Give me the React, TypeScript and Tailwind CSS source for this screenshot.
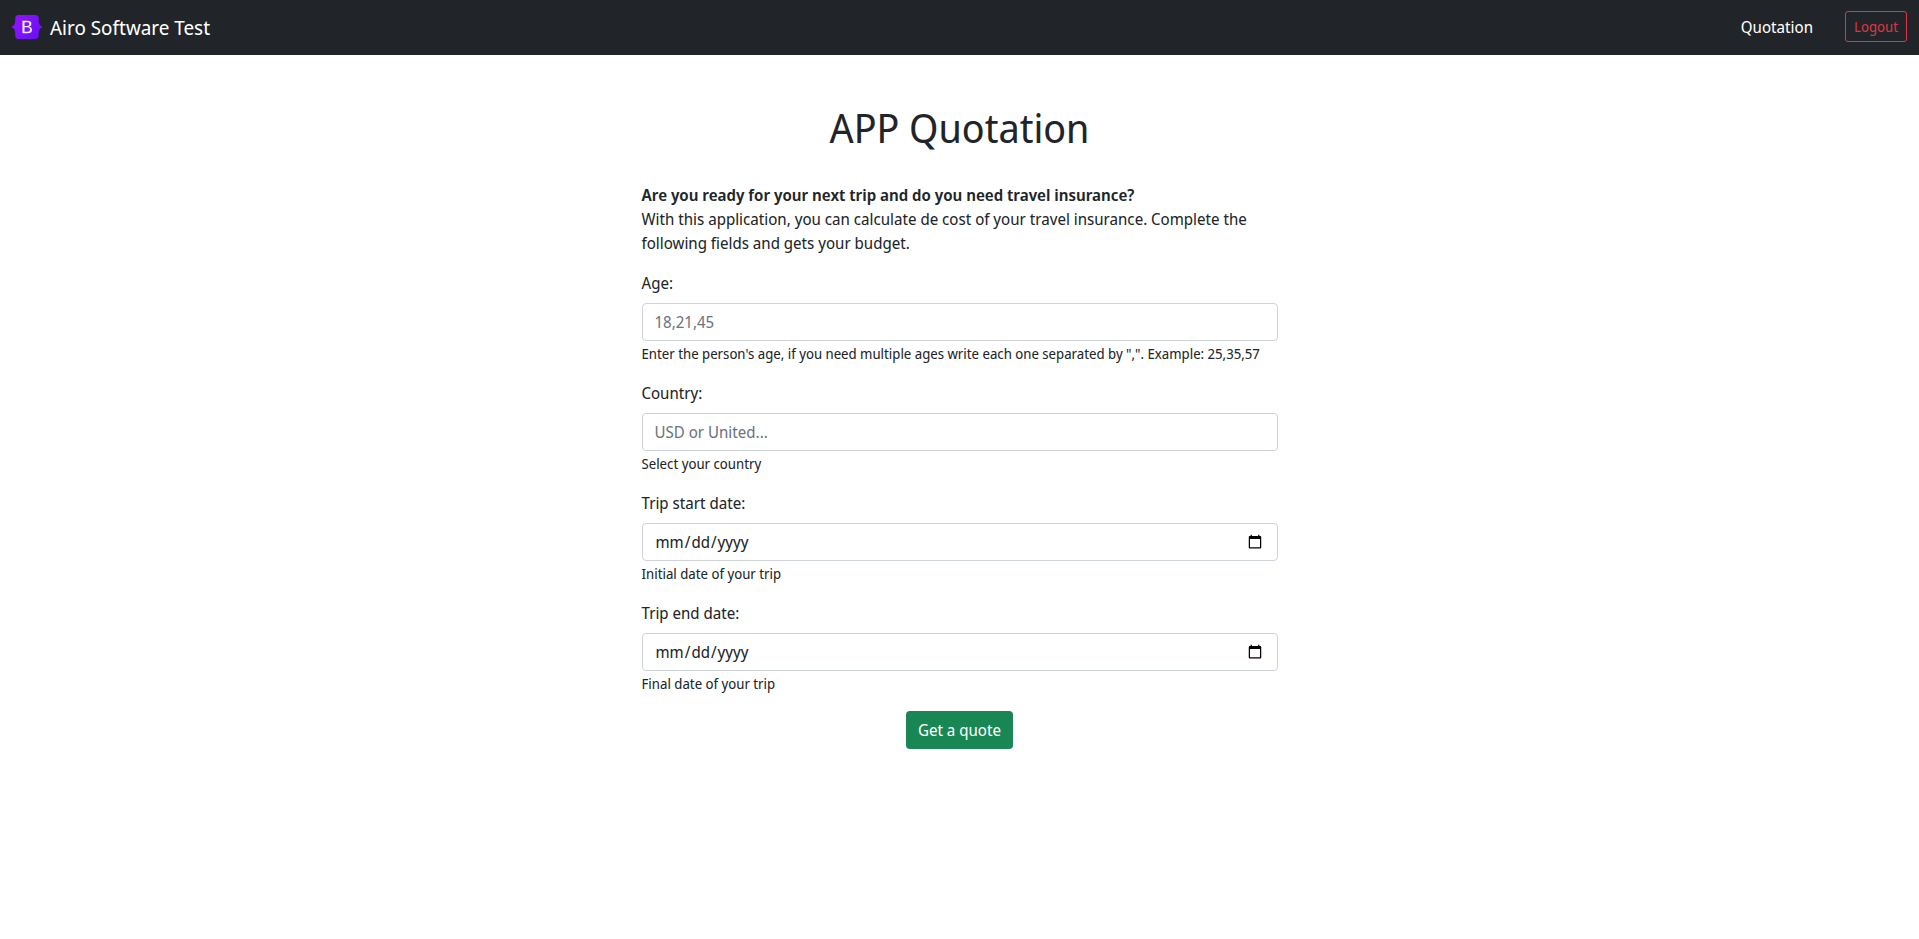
import { useId } from 'react';

function BootstrapLogo() {
  return (
    <svg width="30" height="24" viewBox="0 0 512 408" aria-hidden="true" className="h-6 w-[30px]">
      <defs>
        <linearGradient id="logo-bg" x1="76" y1="11" x2="524" y2="366" gradientUnits="userSpaceOnUse">
          <stop stopColor="#9013fe" />
          <stop offset="1" stopColor="#6610f2" />
        </linearGradient>
        <linearGradient id="logo-letter" x1="194" y1="95" x2="293" y2="263" gradientUnits="userSpaceOnUse">
          <stop stopColor="#fff" />
          <stop offset="1" stopColor="#f1e5fc" />
        </linearGradient>
      </defs>
      <path
        fill="url(#logo-bg)"
        d="M56.500 53.300C55.500 25.500 77.200 0 106.300 0h299.500c29.100 0 50.800 25.500 49.800 53.300-.9 26.700.3 61.300 9 89.500 8.700 28.200 23.500 46.100 47.600 48.400v26c-24.100 2.300-38.900 20.200-47.600 48.400-8.700 28.200-9.900 62.800-9 89.500 1 27.800-20.700 53.300-49.800 53.300H106.300c-29.100 0-50.800-25.500-49.800-53.300.9-26.700-.3-61.300-9-89.500C38.800 237.400 24 219.500-.1 217.200v-26c24.100-2.300 38.900-20.200 47.600-48.400 8.700-28.200 9.900-62.800 9-89.500z"
      />
      <path
        fill="url(#logo-letter)"
        d="M267.100 312.500c47.300 0 75.800-23.200 75.800-61.500 0-28.900-20.400-49.900-50.700-53.200v-1.200c22.300-3.600 39.700-24.300 39.700-47.200 0-32.600-25.700-53.800-65-53.800h-88.300v216.900h88.500zM213.500 123.100h45c24.400 0 38.200 10.900 38.200 30.800 0 21.200-16.300 33-45.700 33h-37.500v-63.800zm0 161.900v-75.100h44.700c32 0 48.600 12.600 48.600 37.300s-16.200 37.800-46.800 37.800h-46.500z"
      />
    </svg>
  );
}

interface FieldProps {
  label: string;
  help: string;
  type: 'text' | 'date';
  placeholder?: string;
}

function Field({ label, help, type, placeholder }: FieldProps) {
  const id = useId();
  return (
    <div className="mb-4">
      <label htmlFor={id} className="mb-2 block">
        {label}
      </label>
      <input
        id={id}
        type={type}
        placeholder={placeholder}
        aria-describedby={`${id}-help`}
        className="block h-[38px] w-full rounded border border-[#ced4da] bg-white px-3 py-1.5 text-[#212529] placeholder:text-[#6c757d]"
      />
      <p id={`${id}-help`}>
        <small className="text-sm leading-5">{help}</small>
      </p>
    </div>
  );
}

export default function App() {
  return (
    <div className="bg-white font-['Noto_Sans_Display','Noto_Sans',sans-serif] text-base leading-6 text-[#212529]">
      <header className="flex items-center justify-between bg-[#212529] px-3 py-2">
        <a href="#" className="flex items-start gap-2 text-xl leading-[26px] text-white">
          <BootstrapLogo />
          Airo Software Test
        </a>
        <nav className="flex items-center gap-8 pb-0.5">
          <a href="#" className="text-white">
            Quotation
          </a>
          <button type="button" className="my-[3px] h-[31px] rounded-[3px] border border-[#dc3545] px-2 text-sm text-[#dc3545]">
            Logout
          </button>
        </nav>
      </header>
      <main className="mx-auto max-w-[660px] px-3 pt-12">
        <h1 className="mb-[30px] text-center text-[40px] leading-[50px]">APP Quotation</h1>
        <p className="mb-4">
          <strong className="font-semibold">Are you ready for your next trip and do you need travel insurance?</strong>
          <br />
          With this application, you can calculate de cost of your travel insurance. Complete the following fields and
          gets your budget.
        </p>
        <form>
          <Field label="Age:" type="text" placeholder="18,21,45" help={'Enter the person\'s age, if you need multiple ages write each one separated by ",". Example: 25,35,57'} />
          <Field label="Country:" type="text" placeholder="USD or United..." help="Select your country" />
          <Field label="Trip start date:" type="date" help="Initial date of your trip" />
          <Field label="Trip end date:" type="date" help="Final date of your trip" />
          <div className="flex justify-center">
            <button type="button" className="h-[38px] rounded bg-[#198754] px-3 text-white">
              Get a quote
            </button>
          </div>
        </form>
      </main>
    </div>
  );
}
